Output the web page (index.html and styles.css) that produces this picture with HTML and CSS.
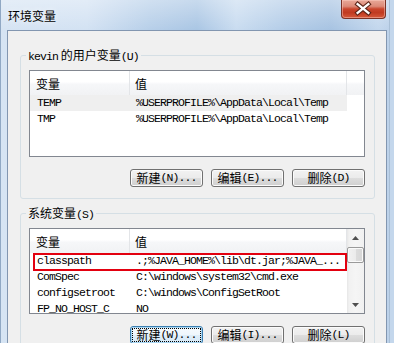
FILE: index.html
```html
<!DOCTYPE html>
<html lang="zh-CN">
<head>
<meta charset="utf-8">
<title>环境变量</title>
<link rel="stylesheet" href="styles.css">
</head>
<body>
<div class="window">
  <div class="titlebar">
    <span class="title">环境变量</span>
    <div class="close" role="button" aria-label="关闭">
      <svg width="45" height="19" viewBox="0 0 45 19">
        <path d="M17 5 L28 14 M28 5 L17 14" stroke="#5a2418" stroke-width="4.6" stroke-linecap="square" fill="none"/>
        <path d="M17 5 L28 14 M28 5 L17 14" stroke="#ffffff" stroke-width="2.4" stroke-linecap="square" fill="none"/>
      </svg>
    </div>
  </div>
  <div class="client">
    <div class="group">
      <div class="group-title"><span class="mono">kevin</span> 的用户变量<span class="mono">(U)</span></div>
      <div class="listbox user">
        <div class="lv-header">
          <div class="hcell c1">变量</div>
          <div class="hcell c2">值</div>
          <div class="hcell c3"></div>
        </div>
        <div class="rows">
          <div class="row sel"><span class="cell c1 mono">TEMP</span><span class="cell c2 mono">%USERPROFILE%\AppData\Local\Temp</span></div>
          <div class="row"><span class="cell c1 mono">TMP</span><span class="cell c2 mono">%USERPROFILE%\AppData\Local\Temp</span></div>
        </div>
      </div>
      <div class="buttons">
        <div class="btn">新建<span class="mono">(N)...</span></div>
        <div class="btn">编辑<span class="mono">(E)...</span></div>
        <div class="btn">删除<span class="mono">(D)</span></div>
      </div>
    </div>

    <div class="group second">
      <div class="group-title">系统变量<span class="mono">(S)</span></div>
      <div class="listbox sys">
        <div class="lv-main">
          <div class="lv-header">
            <div class="hcell c1">变量</div>
            <div class="hcell c2">值</div>
          </div>
          <div class="rows">
            <div class="row marked"><span class="cell c1 mono">classpath</span><span class="cell c2 mono">.;%JAVA_HOME%\lib\dt.jar;%JAVA_...</span><span class="annot"></span></div>
            <div class="row"><span class="cell c1 mono">ComSpec</span><span class="cell c2 mono">C:\windows\system32\cmd.exe</span></div>
            <div class="row"><span class="cell c1 mono">configsetroot</span><span class="cell c2 mono">C:\windows\ConfigSetRoot</span></div>
            <div class="row"><span class="cell c1 mono">FP_NO_HOST_C</span><span class="cell c2 mono">NO</span></div>
          </div>
        </div>
        <div class="vscroll">
          <div class="sbtn"><svg width="7" height="4" viewBox="0 0 7 4"><path d="M0 4 L3.5 0 L7 4 Z" fill="#4f4f4f"/></svg></div>
          <div class="thumb"></div>
          <div class="sbtn down"><svg width="7" height="4" viewBox="0 0 7 4"><path d="M0 0 L3.5 4 L7 0 Z" fill="#4f4f4f"/></svg></div>
        </div>
      </div>
      <div class="buttons">
        <div class="btn default"><span class="focus">新建<span class="mono">(W)...</span></span></div>
        <div class="btn">编辑<span class="mono">(I)...</span></div>
        <div class="btn">删除<span class="mono">(L)</span></div>
      </div>
    </div>
  </div>
</div>
</body>
</html>
```
FILE: styles.css
```css
html, body {
  margin: 0;
  padding: 0;
}
body {
  width: 394px;
  height: 343px;
  overflow: hidden;
  background: #ffffff;
  font-family: "Noto Sans CJK SC", "Liberation Sans", sans-serif;
  font-size: 12px;
  color: #000;
}
.mono {
  font-family: "Liberation Mono", "Noto Sans CJK SC", monospace;
  font-size: 11.5px;
  letter-spacing: -0.9px;
}

/* window frame */
.window {
  height: 343px;
  overflow: hidden;
  background:
    linear-gradient(180deg, rgba(255,255,255,0.35) 0, rgba(255,255,255,0) 30px),
    linear-gradient(90deg, #d6e4f3 0%, #d3e2f3 22%, #b7cfe9 38%, #aac6e4 50%, #c9dcf0 60%, #b4cde8 72%, #a7c3e2 84%, #c3d7ed 96%, #b9cfe8 100%);
  box-shadow: inset 1px 0 0 #90a8c4, inset -4px 0 0 #c4d7ec, inset -5px 0 0 #a9bfd6;
}
.titlebar {
  display: flex;
  align-items: flex-start;
  height: 30px;
  padding-left: 8px;
}
.title {
  margin-top: 8px;
  line-height: 16px;
  font-size: 12px;
  color: #000;
  text-shadow: 0 0 6px rgba(255,255,255,0.9);
}
.close {
  margin-left: auto;
  margin-right: 8px;
  width: 45px;
  height: 19px;
  box-sizing: border-box;
  border: 1px solid #7a3226;
  border-top: none;
  border-radius: 0 0 4px 4px;
  background: linear-gradient(180deg, #e8a898 0%, #dc8a78 35%, #c9452c 50%, #c03a20 70%, #d6593b 100%);
  box-shadow: inset 0 0 0 1px rgba(255,210,200,0.45);
  display: flex;
}
.close svg {
  display: block;
  margin: -1px 0 0 -1px;
}

/* client area */
.client {
  margin: 0 7px 0 7px;
  border: 1px solid #8296b0;
  border-bottom: none;
  background: #f0f0f0;
  height: 313px;
  overflow: hidden;
}

/* group boxes */
.group {
  margin: 24px 11px 0 12px;
  border: 1px solid #d5dfe5;
  border-radius: 3px;
  padding: 0 9px 11px 8px;
}
.group.second {
  margin-top: 14px;
}
.group-title {
  display: table;
  margin: -8px 0 0 -3px;
  padding: 0 2px;
  height: 14px;
  line-height: 14px;
  background: #f0f0f0;
  white-space: nowrap;
}

/* list views */
.listbox {
  margin-top: 6px;
  box-sizing: border-box;
  border: 1px solid #828790;
  background: #ffffff;
  overflow: hidden;
}
.listbox.user {
  height: 87px;
}
.listbox.sys {
  height: 86px;
  display: flex;
}
.lv-main {
  width: 317px;
  flex: none;
}
.lv-header {
  display: flex;
  height: 24px;
  background: linear-gradient(180deg, #ffffff 0%, #ffffff 45%, #f6f7f9 55%, #f1f2f4 100%);
}
.hcell {
  box-sizing: border-box;
  height: 24px;
  line-height: 25px;
  padding-left: 6px;
  border-right: 1px solid #e3e5e8;
  white-space: nowrap;
}
.hcell.c2 {
  padding-left: 5px;
}
.c1 { width: 100px; flex: none; }
.c2 { width: 217px; flex: none; }
.hcell.c3 {
  flex: 1;
  border-right: none;
}
.rows {
  width: 317px;
}
.row {
  display: flex;
  height: 16px;
  line-height: 16px;
  white-space: nowrap;
}
.row.sel {
  background: #efefef;
}
.row.marked {
  position: relative;
}
.cell {
  box-sizing: border-box;
  overflow: hidden;
}
.cell.c1 { padding-left: 7px; }
.cell.c2 { padding-left: 6px; }
.annot {
  position: absolute;
  left: 3px;
  top: 0;
  width: 314px;
  height: 18px;
  box-sizing: border-box;
  border: 2px solid #e3000f;
}

/* scrollbar */
.vscroll {
  width: 17px;
  flex: none;
  display: flex;
  flex-direction: column;
  background: linear-gradient(90deg, #e6e6e6 0, #f1f1f1 2px, #f5f5f5 50%, #f1f1f1 100%);
}
.sbtn {
  height: 17px;
  display: flex;
  align-items: center;
  justify-content: center;
}
.sbtn.down {
  margin-top: auto;
}
.thumb {
  margin: 1px 0 0 0;
  height: 16px;
  box-sizing: border-box;
  border: 1px solid #9a9a9a;
  border-radius: 2px;
  background: linear-gradient(90deg, #f2f2f2 0%, #ebebeb 50%, #dcdcdc 55%, #d6d6d6 100%);
  box-shadow: inset 0 0 0 1px #fafafa;
}

/* buttons */
.buttons {
  display: flex;
  justify-content: flex-end;
  gap: 8px;
  margin-top: 12px;
}
.btn {
  width: 73px;
  height: 18px;
  box-sizing: border-box;
  border: 1px solid #707070;
  border-radius: 3px;
  background: linear-gradient(180deg, #f2f2f2 0%, #ebebeb 50%, #dddddd 51%, #cfcfcf 100%);
  box-shadow: inset 0 0 0 1px #fbfbfb;
  display: flex;
  align-items: center;
  justify-content: center;
  line-height: 16px;
  white-space: nowrap;
}
.btn.default {
  border-color: #3c7fb1;
  background: linear-gradient(180deg, #f7fbfe 0%, #eef6fc 50%, #e0eef9 51%, #d6e9f7 100%);
  box-shadow: inset 0 0 0 1px #a9d6f2;
  align-items: stretch;
}
.btn .focus {
  flex: 1;
  margin: 1px;
  border: 1px dotted #000;
  display: flex;
  align-items: center;
  justify-content: center;
  line-height: 12px;
}
```
